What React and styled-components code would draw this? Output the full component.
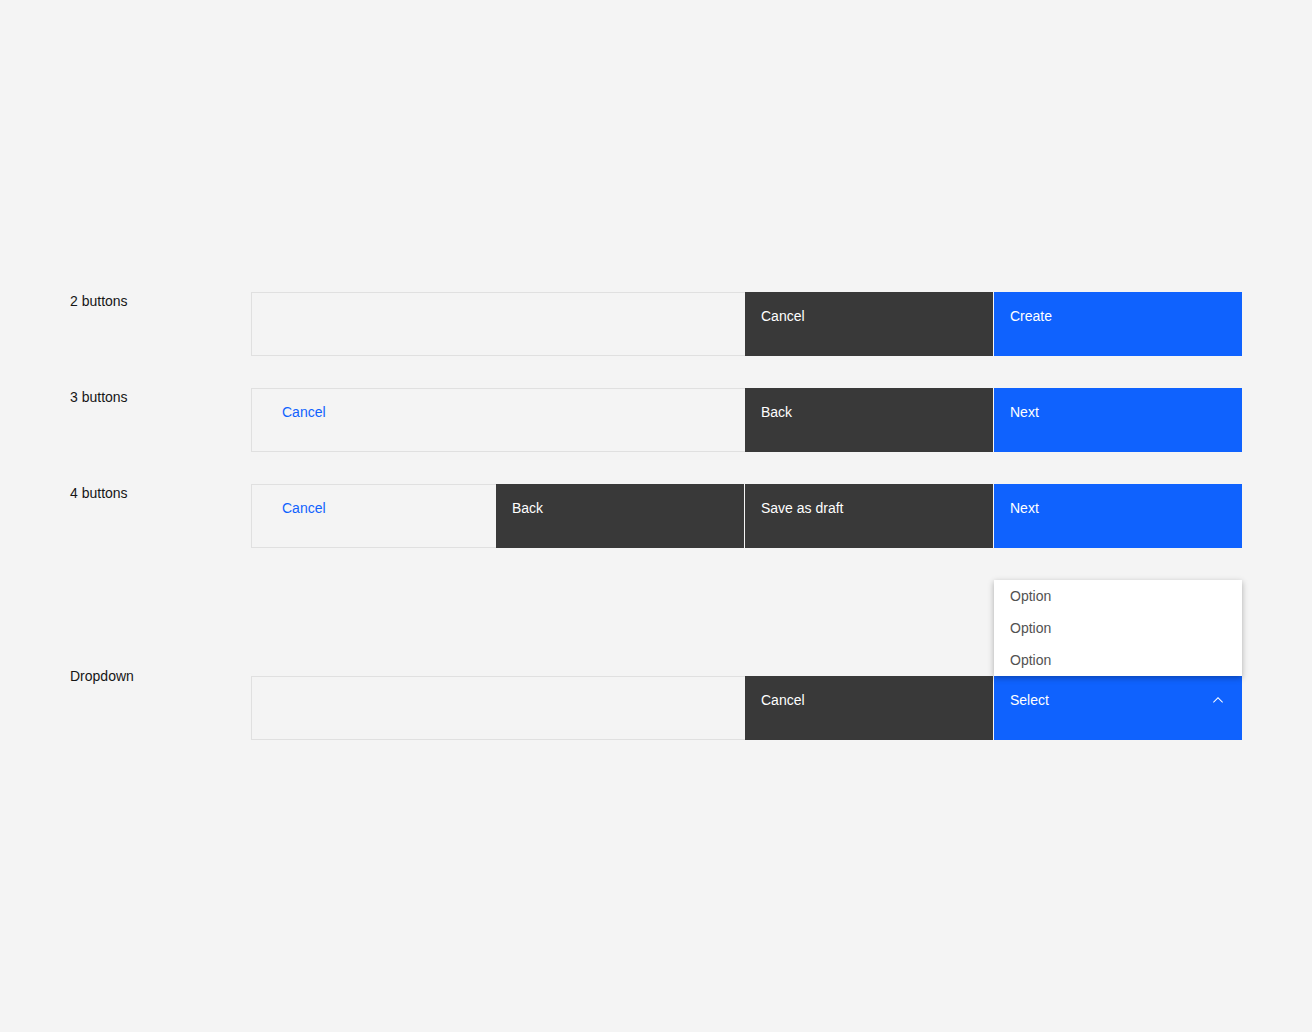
import React from "react";
import styled, { createGlobalStyle } from "styled-components";

const GlobalStyle = createGlobalStyle`
  html, body {
    margin: 0;
    padding: 0;
    background: #f4f4f4;
  }
  body {
    font-family: "Liberation Sans", Arial, sans-serif;
    color: #161616;
    -webkit-font-smoothing: antialiased;
  }
`;

const Page = styled.div`
  min-height: 100vh;
  box-sizing: border-box;
  padding: 0 70px;
  display: flex;
  flex-direction: column;
  justify-content: center;
  gap: 32px;
`;

const Row = styled.div`
  display: flex;
  align-items: flex-start;
  margin-top: ${({ $offset }) => $offset || 0}px;
`;

const Label = styled.div`
  width: 181px;
  flex-shrink: 0;
  margin-top: ${({ $raise }) => ($raise ? -$raise : 0)}px;
  font-size: 14px;
  line-height: 18px;
  color: #161616;
`;

const Footer = styled.div`
  flex: 1;
  height: 64px;
  display: flex;
`;

const Spacer = styled.div`
  flex: 1;
  box-sizing: border-box;
  border: 1px solid #e0e0e0;
  border-right: none;
`;

const GhostButton = styled(Spacer).attrs({ as: "button" })`
  background: transparent;
  font: inherit;
  font-size: 14px;
  line-height: 18px;
  color: #0f62fe;
  text-align: left;
  padding: 14px 16px 13px 30px;
  display: flex;
  align-items: flex-start;
  cursor: pointer;
`;

const Button = styled.button`
  width: 248px;
  flex-shrink: 0;
  box-sizing: border-box;
  border: none;
  margin: 0 0 0 ${({ $sep }) => ($sep ? 1 : 0)}px;
  padding: 15px 16px 14px;
  font: inherit;
  font-size: 14px;
  line-height: 18px;
  text-align: left;
  color: #ffffff;
  background: ${({ $kind }) => ($kind === "primary" ? "#0f62fe" : "#393939")};
  display: flex;
  align-items: flex-start;
  justify-content: space-between;
  cursor: pointer;
`;

const DropWrap = styled.div`
  position: relative;
  display: flex;
  margin-left: 1px;
`;

const Menu = styled.ul`
  position: absolute;
  bottom: 100%;
  left: 0;
  width: 248px;
  margin: 0;
  padding: 0;
  list-style: none;
  background: #ffffff;
  box-shadow: 0 2px 6px rgba(0, 0, 0, 0.3);
`;

const MenuItem = styled.li`
  height: 32px;
  padding: 0 16px;
  display: flex;
  align-items: center;
  font-size: 14px;
  color: #525252;
`;

const Chevron = styled.svg`
  width: 16px;
  height: 16px;
  margin-top: 1px;
  fill: currentColor;
`;

const ChevronUp = () => (
  <Chevron viewBox="0 0 16 16">
    <path d="M8 5 13 10 12.3 10.7 8 6.4 3.7 10.7 3 10z" />
  </Chevron>
);

export default function App() {
  return (
    <>
      <GlobalStyle />
      <Page>
        <Row>
          <Label>2 buttons</Label>
          <Footer>
            <Spacer />
            <Button>Cancel</Button>
            <Button $kind="primary" $sep>Create</Button>
          </Footer>
        </Row>
        <Row>
          <Label>3 buttons</Label>
          <Footer>
            <GhostButton>Cancel</GhostButton>
            <Button>Back</Button>
            <Button $kind="primary" $sep>Next</Button>
          </Footer>
        </Row>
        <Row>
          <Label>4 buttons</Label>
          <Footer>
            <GhostButton>Cancel</GhostButton>
            <Button>Back</Button>
            <Button $sep>Save as draft</Button>
            <Button $kind="primary" $sep>Next</Button>
          </Footer>
        </Row>
        <Row $offset={96}>
          <Label $raise={9}>Dropdown</Label>
          <Footer>
            <Spacer />
            <Button>Cancel</Button>
            <DropWrap>
              <Menu>
                <MenuItem>Option</MenuItem>
                <MenuItem>Option</MenuItem>
                <MenuItem>Option</MenuItem>
              </Menu>
              <Button $kind="primary">
                Select
                <ChevronUp />
              </Button>
            </DropWrap>
          </Footer>
        </Row>
      </Page>
    </>
  );
}
